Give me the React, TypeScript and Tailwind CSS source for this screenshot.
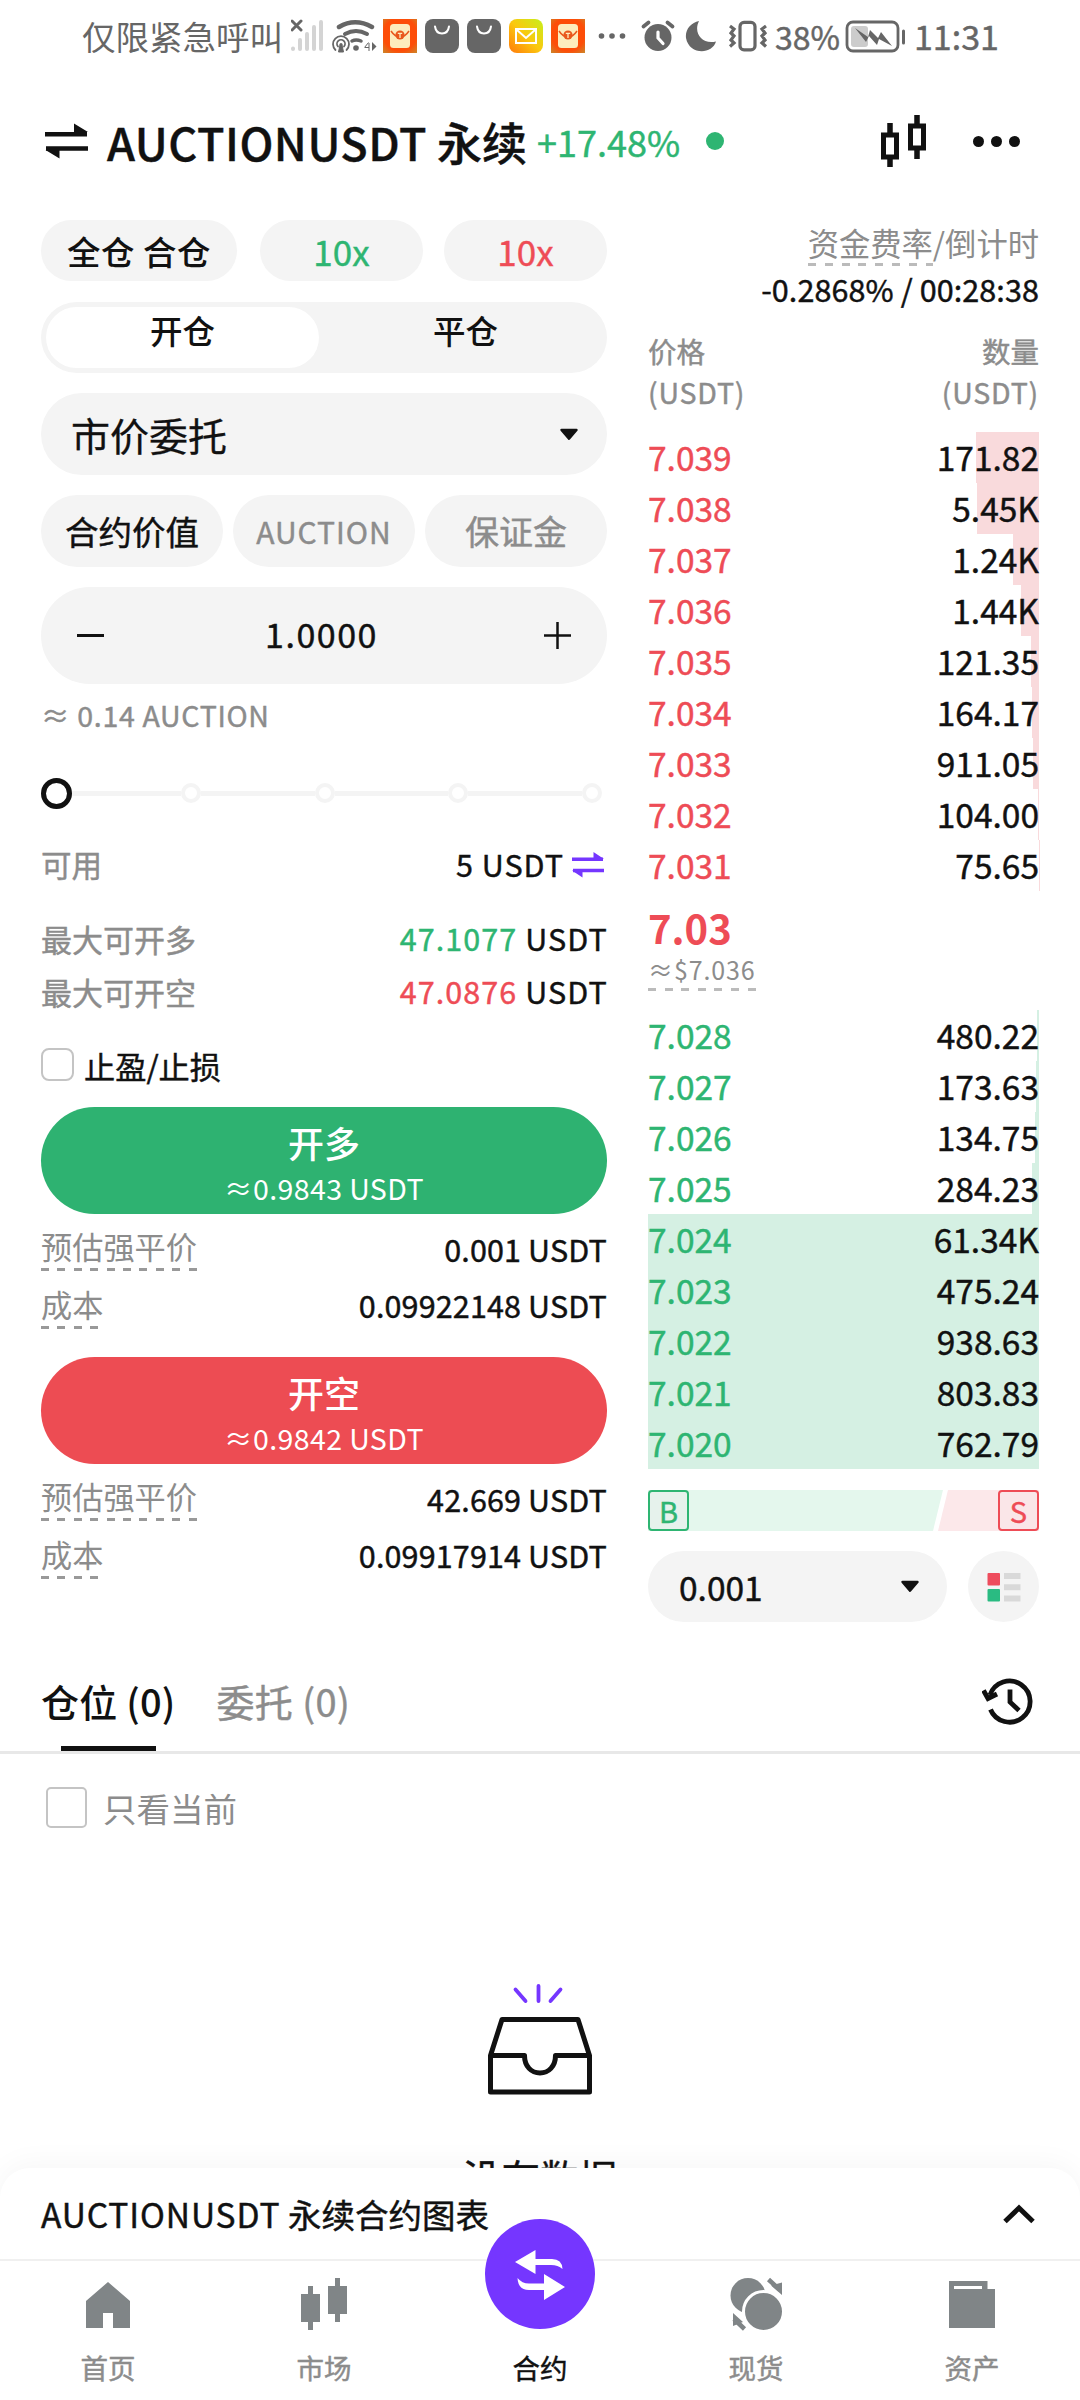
import { useState, type ReactNode } from "react";

type BookRow = { price: string; amount: string; depth: number };

// depth is the bar width in px, out of the 391px wide column
const ASKS: BookRow[] = [
  { price: "7.039", amount: "171.82", depth: 63 },
  { price: "7.038", amount: "5.45K", depth: 62 },
  { price: "7.037", amount: "1.24K", depth: 26 },
  { price: "7.036", amount: "1.44K", depth: 18 },
  { price: "7.035", amount: "121.35", depth: 8 },
  { price: "7.034", amount: "164.17", depth: 7.5 },
  { price: "7.033", amount: "911.05", depth: 6.5 },
  { price: "7.032", amount: "104.00", depth: 1 },
  { price: "7.031", amount: "75.65", depth: 0.5 },
];

const BIDS: BookRow[] = [
  { price: "7.028", amount: "480.22", depth: 2.5 },
  { price: "7.027", amount: "173.63", depth: 3.5 },
  { price: "7.026", amount: "134.75", depth: 4.5 },
  { price: "7.025", amount: "284.23", depth: 7 },
  { price: "7.024", amount: "61.34K", depth: 391 },
  { price: "7.023", amount: "475.24", depth: 391 },
  { price: "7.022", amount: "938.63", depth: 391 },
  { price: "7.021", amount: "803.83", depth: 391 },
  { price: "7.020", amount: "762.79", depth: 391 },
];

const MEDIUM = "[-webkit-text-stroke:0.45px_currentColor]";

function Caret() {
  return (
    <svg width="20" height="13" viewBox="0 0 20 13" aria-hidden>
      <path
        d="M2.5 2h15L10 10.8z"
        fill="#111"
        stroke="#111"
        strokeWidth="2.4"
        strokeLinejoin="round"
      />
    </svg>
  );
}

function RedPacket() {
  return (
    <svg width="34" height="34" viewBox="0 0 34 34" aria-hidden>
      <defs>
        <radialGradient id="packet" cx="50%" cy="45%" r="75%">
          <stop offset="0.65" stopColor="#fd4d08" />
          <stop offset="1" stopColor="#c98a2c" />
        </radialGradient>
      </defs>
      <rect width="34" height="34" fill="url(#packet)" />
      <rect x="7" y="5" width="20" height="24" rx="3.5" fill="#fdecbd" />
      <path d="M8 12q4 6 9 6t9-6" fill="none" stroke="#e9571c" strokeWidth="1.5" />
      <circle cx="17" cy="16" r="4.6" fill="#e9571c" />
      <path d="M14.8 14.4h4.4M17 14.4V19" stroke="#fdecbd" strokeWidth="1.3" />
    </svg>
  );
}

function Bag() {
  return (
    <svg width="34" height="34" viewBox="0 0 34 34" aria-hidden>
      <rect width="34" height="34" rx="8" fill="#666" />
      <path
        d="M10 7.500q1 7 7 7t7-7"
        fill="none"
        stroke="#fff"
        strokeWidth="2"
        strokeLinecap="round"
      />
    </svg>
  );
}

function Mail() {
  return (
    <svg width="34" height="34" viewBox="0 0 34 34" aria-hidden>
      <defs>
        <linearGradient id="mail" x1="0" y1="1" x2="1" y2="0">
          <stop offset="0" stopColor="#ff7a0a" />
          <stop offset="0.5" stopColor="#fbc80f" />
          <stop offset="1" stopColor="#c6f01c" />
        </linearGradient>
      </defs>
      <rect width="34" height="34" rx="8" fill="url(#mail)" />
      <path
        d="M7 10h20v14H7zM8 11l9 8 9-8"
        fill="none"
        stroke="#fff"
        strokeWidth="2"
      />
    </svg>
  );
}

function StatusBar() {
  return (
    <div className="flex h-[72px] items-center pl-[82px] text-[#666]">
      <span className="w-[209px] whitespace-nowrap text-[33.5px] leading-none">
        仅限紧急呼叫
      </span>
      <svg width="92" height="34" viewBox="0 0 92 34" aria-hidden>
        <path
          d="M1 2l9 9M10 2l-9 9"
          stroke="#666"
          strokeWidth="3"
          strokeLinecap="round"
        />
        <path
          d="M2 29.500v.5M9 21v9M16 15v15M23 8v22M30 3v27"
          stroke="#d4d4d4"
          strokeWidth="4"
          strokeLinecap="round"
        />
        <g fill="none" stroke="#666" strokeLinecap="round">
          <path d="M48 8q16-9.500 33 0" strokeWidth="4.500" />
          <path d="M54 15q11-6 22 0" strokeWidth="4" />
          <path d="M61 22q4-2 9 0" strokeWidth="3.500" />
          <path
            d="M44.500 31a8 8 0 1 1 11 0M47 27.500a4 4 0 1 1 6 0"
            strokeWidth="1.800"
          />
        </g>
        <circle cx="65" cy="29" r="2.800" fill="#666" />
        <circle cx="50" cy="25.500" r="1.600" fill="#666" />
        <path d="M49 26h2l1.500 7h-5zM78 24v8M74 28.500h4M77.500 23.500l-4 5" stroke="#666" fill="#666" />
        <path d="M81 23l4.500 4.500L81 32z" fill="#666" />
      </svg>
      <div className="flex gap-2">
        <RedPacket />
        <Bag />
        <Bag />
        <Mail />
        <RedPacket />
      </div>
      <svg width="188" height="34" viewBox="0 0 188 34" aria-hidden>
        <g fill="#666">
          <circle cx="16.500" cy="17" r="2.800" />
          <circle cx="27" cy="17" r="2.800" />
          <circle cx="37.500" cy="17" r="2.800" />
          <circle cx="73" cy="18.500" r="13.500" />
          <path d="M114 2c-6 12 3 24 17 20.500C127 36 104 36 101 19 100 10 106 4 114 2z" />
        </g>
        <path
          d="M73 13v6l5 5.500"
          fill="none"
          stroke="#fff"
          strokeWidth="3.200"
          strokeLinecap="round"
        />
        <path
          d="M58.500 7.500l5-4M87.500 7.500l-5-4"
          stroke="#666"
          strokeWidth="3.800"
          strokeLinecap="round"
        />
        <g fill="none" stroke="#666" strokeWidth="3.200">
          <rect x="155" y="3.400" width="15" height="27.500" rx="4" />
          <path d="M145 7l4 3-3 4 3 3-3 4 3 3-4 3.500M181 7l-4 3 3 4-3 3 3 4-3 3 4 3.500" />
        </g>
      </svg>
      <span className={`ml-[2px] w-[70px] text-[32px] leading-none ${MEDIUM}`}>38%</span>
      <svg width="62" height="34" viewBox="0 0 62 34" aria-hidden>
        <rect x="2" y="3" width="51" height="29" rx="6" fill="none" stroke="#666" strokeWidth="2.800" />
        <rect x="6" y="7" width="17" height="21" rx="3" fill="#ccc" />
        <path d="M10 9l13 9 2-7 8 8 3-6 11 14-13-7-2 6-8-9-3 6z" fill="#666" />
        <path d="M58.500 12v12" stroke="#666" strokeWidth="3" strokeLinecap="round" />
      </svg>
      <span className={`ml-[7px] text-[34px] leading-none ${MEDIUM}`}>11:31</span>
    </div>
  );
}

function Header() {
  return (
    <header className="flex h-[138px] items-center pl-[44px] pr-[60px]">
      <svg width="46" height="36" viewBox="0 0 46 36" aria-hidden>
        <path d="M1 11.300h42M2 25.500h42" stroke="#111" strokeWidth="4.600" />
        <path d="M30 .5V9h14zM15.500 35.500V27H1.500z" fill="#111" />
      </svg>
      <h1 className="ml-[17px] mt-px whitespace-nowrap text-[45px] font-medium leading-none [-webkit-text-stroke:0.4px_currentColor]">
        <span className="tracking-[0.500px]">AUCTIONUSDT</span> 永续
      </h1>
      <span className={`ml-[10px] whitespace-nowrap text-[36px] leading-none text-[#2eb572] ${MEDIUM}`}>
        +17.48%
      </span>
      <span className="ml-[26px] size-[18px] rounded-full bg-[#2eb572]" />
      <svg className="ml-auto" width="50" height="52" viewBox="0 0 50 52" aria-hidden>
        <g fill="none" stroke="#111">
          <rect x="3.500" y="20" width="13" height="22" strokeWidth="5" />
          <path d="M10 8v11M10 43v9" strokeWidth="5.500" />
          <rect x="30.500" y="11" width="13" height="22" strokeWidth="5" />
          <path d="M37 0v10M37 34v10" strokeWidth="5.500" />
        </g>
      </svg>
      <div className="ml-[43px] flex gap-[7px]">
        <span className="size-[11px] rounded-full bg-[#111]" />
        <span className="size-[11px] rounded-full bg-[#111]" />
        <span className="size-[11px] rounded-full bg-[#111]" />
      </div>
    </header>
  );
}

function Pill({ className, children }: { className: string; children: ReactNode }) {
  return (
    <button
      className={`flex items-center justify-center whitespace-nowrap rounded-full bg-[#f4f4f4] leading-none ${className}`}
    >
      {children}
    </button>
  );
}

function HintLabel({ children }: { children: ReactNode }) {
  return (
    <span className="flex flex-col gap-[5px] text-[31.200px] leading-[34px] text-[#8c8c8c]">
      {children}
      <span className="h-[3px] bg-[repeating-linear-gradient(90deg,#999_0_8px,transparent_8px_16.400px)]" />
    </span>
  );
}

function Slider() {
  return (
    <div className="flex h-[94px] items-center pr-[5px]">
      <span className="z-10 -mr-[5px] size-[31px] shrink-0 rounded-full border-[5px] border-[#111] bg-white" />
      {[25, 50, 75, 100].map((step) => (
        <div key={step} className="flex flex-1 items-center">
          <span className="h-[5px] flex-1 bg-[#f4f4f4]" />
          <span className="size-[20px] rounded-full border-4 border-[#f4f4f4] bg-white" />
        </div>
      ))}
    </div>
  );
}

function OrderSide({
  label,
  size,
  liquidation,
  cost,
  className,
}: {
  label: string;
  size: string;
  liquidation: string;
  cost: string;
  className: string;
}) {
  return (
    <div>
      <button
        className={`flex h-[107px] w-full flex-col items-center rounded-full pt-[15px] text-white ${className}`}
      >
        <span className="text-[36px] font-medium leading-[40px]">{label}</span>
        <span className="mt-[10px] text-[28.500px] leading-[32px] tracking-[0.400px]">
          ≈{size} USDT
        </span>
      </button>
      <div className="flex h-[64px] items-center justify-between">
        <div className="pt-[8px]">
          <HintLabel>预估强平价</HintLabel>
        </div>
        <span className={`pt-[7px] text-[30.500px] tracking-[0.150px] ${MEDIUM}`}>{liquidation} USDT</span>
      </div>
      <div className="flex h-[52px] items-center justify-between">
        <div className="pt-[8px]">
          <HintLabel>成本</HintLabel>
        </div>
        <span className={`pt-[4px] text-[30.500px] tracking-[0.150px] ${MEDIUM}`}>{cost} USDT</span>
      </div>
    </div>
  );
}

function OrderForm() {
  const [mode, setMode] = useState("开仓");
  return (
    <section className="w-[566px]">
      <div className="flex h-[61px]">
        <Pill className="w-[196px] text-[33.500px] tracking-[0.500px] font-medium">全仓 合仓</Pill>
        <Pill className={`ml-[23px] w-[163px] text-[35px] text-[#2eb572] ${MEDIUM}`}>10x</Pill>
        <Pill className={`ml-[21px] w-[163px] text-[35px] text-[#ee4c56] ${MEDIUM}`}>10x</Pill>
      </div>

      <div className="mt-[21px] flex h-[71px] justify-between rounded-full bg-[#f4f4f4] p-[5px]">
        {["开仓", "平仓"].map((m) => (
          <button
            key={m}
            onClick={() => setMode(m)}
            className={`h-[61px] w-[273px] rounded-full pb-[14px] text-[32.500px] font-medium leading-none ${
              mode === m ? "bg-white" : ""
            }`}
          >
            {m}
          </button>
        ))}
      </div>

      <div className="mt-5 flex h-[82px] items-center justify-between rounded-full bg-[#f4f4f4] pl-[30px] pr-[28px]">
        <span className="text-[39px] leading-none [-webkit-text-stroke:0.3px_currentColor]">市价委托</span>
        <Caret />
      </div>

      <div className="mt-5 flex h-[72px] justify-between">
        <Pill className={`w-[182px] text-[33.500px] ${MEDIUM}`}>合约价值</Pill>
        <Pill className={`w-[182px] text-[30px] tracking-[1px] text-[#8c8c8c] ${MEDIUM}`}>AUCTION</Pill>
        <Pill className={`w-[182px] text-[34px] text-[#8c8c8c] ${MEDIUM}`}>保证金</Pill>
      </div>

      <div className="mt-5 flex h-[97px] items-center justify-between rounded-full bg-[#f4f4f4] px-[36px]">
        <span className="h-[2.500px] w-[27px] bg-[#111]" />
        <span className={`mr-[5px] pb-[4px] text-[34px] leading-none tracking-[1.500px] ${MEDIUM}`}>1.0000</span>
        <svg width="27" height="27" viewBox="0 0 27 27" aria-hidden>
          <path d="M0 13.500h27M13.500 0v27" stroke="#111" strokeWidth="2.500" />
        </svg>
      </div>

      <p className={`flex h-[62px] items-center text-[28.500px] tracking-[0.700px] text-[#8c8c8c] ${MEDIUM}`}>
        ≈ 0.14 AUCTION
      </p>

      <Slider />

      <div className="flex h-[50px] items-center">
        <span className={`text-[30.500px] text-[#8c8c8c] ${MEDIUM}`}>可用</span>
        <span className={`ml-auto text-[30.500px] tracking-[1px] ${MEDIUM}`}>5 USDT</span>
        <svg className="ml-[8px] mr-[3px]" width="32" height="26" viewBox="0 0 32 26" aria-hidden>
          <path d="M0 7.200h31M1 18.500h31" stroke="#7536ff" strokeWidth="3.400" />
          <path d="M21.500 0v7H32zM10.500 25.500v-7H0z" fill="#7536ff" />
        </svg>
      </div>

      <div className="mt-[23px] flex h-[52px] items-center justify-between">
        <span className={`text-[31px] text-[#8c8c8c] ${MEDIUM}`}>最大可开多</span>
        <span className={`-mr-px text-[30.500px] tracking-[1.100px] ${MEDIUM}`}>
          <span className="text-[#2eb572]">47.1077</span> USDT
        </span>
      </div>
      <div className="flex h-[54px] items-center justify-between">
        <span className={`text-[31px] text-[#8c8c8c] ${MEDIUM}`}>最大可开空</span>
        <span className={`-mr-px text-[30.500px] tracking-[1.100px] ${MEDIUM}`}>
          <span className="text-[#ee4c56]">47.0876</span> USDT
        </span>
      </div>

      <label className="flex h-[88px] items-center gap-[10px] pt-[3px]">
        <span className="size-[33px] rounded-[8px] border-2 border-[#c4c4c4]" />
        <span className={`pt-[3px] text-[31.200px] ${MEDIUM}`}>止盈/止损</span>
      </label>

      <OrderSide
        label="开多"
        size="0.9843"
        liquidation="0.001"
        cost="0.09922148"
        className="bg-[#2eb271]"
      />
      <div className="mt-[27px]">
        <OrderSide
          label="开空"
          size="0.9842"
          liquidation="42.669"
          cost="0.09917914"
          className="bg-[#ed4c53]"
        />
      </div>
    </section>
  );
}

function BookRows({ rows, side }: { rows: BookRow[]; side: "ask" | "bid" }) {
  const ask = side === "ask";
  return (
    <div className={`text-[33.500px] ${MEDIUM}`}>
      {rows.map((row) => (
        <div key={row.price} className="relative flex h-[51px] items-center justify-between pb-[2px] leading-none">
          <div
            className={`absolute inset-y-0 right-0 ${ask ? "bg-[#f9dadc]" : "bg-[#d5f0e3]"}`}
            style={{ width: row.depth }}
          />
          <span className={`relative ${ask ? "text-[#ee4c56]" : "text-[#2eb572]"}`}>
            {row.price}
          </span>
          <span className="relative">{row.amount}</span>
        </div>
      ))}
    </div>
  );
}

function OrderBook() {
  return (
    <section className="w-[391px]">
      <div className="flex h-[46px] justify-end text-[31.300px] leading-[46px] text-[#8c8c8c]">
        <span className="bg-[repeating-linear-gradient(90deg,#bbb_0_8px,transparent_8px_16.800px)] bg-[length:100%_3px] bg-bottom bg-no-repeat">
          资金费率
        </span>
        /倒计时
      </div>
      <p className={`whitespace-nowrap text-right text-[30.500px] leading-[46px] tracking-[0.100px] ${MEDIUM}`}>
        -0.2868% / 00:28:38
      </p>

      <div className={`mt-[18px] flex justify-between text-[28.500px] leading-[41px] text-[#8c8c8c] ${MEDIUM}`}>
        <div>
          价格
          <br />
          <span className="tracking-[0.800px]">(USDT)</span>
        </div>
        <div className="text-right">
          数量
          <br />
          <span className="tracking-[0.800px]">(USDT)</span>
        </div>
      </div>

      <div className="mt-5">
        <BookRows rows={ASKS} side="ask" />
      </div>

      <div className="flex h-[119px] flex-col items-start pt-[14px]">
        <span className="text-[40px] font-bold leading-[44px] text-[#ee4c56]">7.03</span>
        <span className="mt-[6px] w-[109px] whitespace-nowrap text-[25px] leading-[28px] tracking-[0.900px] text-[#8c8c8c]">
          ≈$7.036
        </span>
        <span className="mt-[5px] h-[3px] w-[108px] bg-[repeating-linear-gradient(90deg,#bbb_0_8px,transparent_8px_16.600px)]" />
      </div>

      <BookRows rows={BIDS} side="bid" />

      <div className={`mt-[21px] flex h-[41px] text-[29px] ${MEDIUM}`}>
        <div className="flex flex-1 bg-[#e4f7ed] [clip-path:polygon(0_0,100%_0,calc(100%_-_10px)_100%,0_100%)]">
          <span className="flex size-[41px] items-center justify-center rounded border-[2.500px] border-[#2eb572] bg-[#e6f2ec] pb-px leading-none text-[#2eb572]">
            B
          </span>
        </div>
        <div className="-ml-[5px] flex w-[101px] justify-end bg-[#fce8ea] [clip-path:polygon(10px_0,100%_0,100%_100%,0_100%)]">
          <span className="flex size-[41px] items-center justify-center rounded border-[2.500px] border-[#ee4c56] bg-[#fae6e8] pb-px leading-none text-[#ee4c56]">
            S
          </span>
        </div>
      </div>

      <div className="mt-5 flex h-[71px] justify-between">
        <div className="flex w-[299px] items-center justify-between rounded-full bg-[#f4f4f4] pl-[31px] pr-[27px]">
          <span className={`text-[33.500px] leading-none ${MEDIUM}`}>0.001</span>
          <Caret />
        </div>
        <button className="flex size-[71px] items-center justify-center rounded-full bg-[#f4f4f4]" aria-label="Depth view">
          <svg width="34" height="30" viewBox="0 0 34 30">
            <rect x=".5" y="1" width="12.500" height="12.500" rx="1" fill="#ee4c5d" />
            <rect x=".5" y="17" width="12.500" height="12.500" rx="1" fill="#2abb82" />
            <path d="M17 4h16.500M17 15.200h16.500M17 26.500h16.500" stroke="#d9d9d9" strokeWidth="6" />
          </svg>
        </button>
      </div>
    </section>
  );
}

function Positions() {
  return (
    <section>
      <div className="mt-[28px] flex h-[104px] items-center border-b-[3px] border-[#e8e8e8] pl-[41px] pr-[46px] text-[38px]">
        <div className="relative flex h-full items-center whitespace-nowrap font-medium tracking-[0.200px]">
          仓位 (0)
          <span className="absolute bottom-0 left-[20px] h-[5px] w-[95px] bg-[#111]" />
        </div>
        <span className={`ml-[41px] whitespace-nowrap tracking-[0.400px] text-[#8c8c8c] ${MEDIUM}`}>委托 (0)</span>
        <svg className="ml-auto" width="52" height="50" viewBox="0 0 52 50" aria-hidden>
          <g fill="none" stroke="#111" strokeWidth="4.800">
            <path d="M8.500 33.500A20.600 20.600 0 1 0 8 19" />
            <path d="M1.500 14.500l4.500 8 9-4.500" />
            <path d="M28 13.500V26l9 8.500" />
          </g>
        </svg>
      </div>
      <label className="mt-[33px] flex h-[41px] items-center gap-[16px] pl-[46px]">
        <span className="size-[41px] rounded-[5px] border-[2.500px] border-[#c4c4c4]" />
        <span className="text-[33.500px] leading-none text-[#8c8c8c]">只看当前</span>
      </label>
      <div className="mt-[154px] flex flex-col items-center">
        <svg width="108" height="118" viewBox="0 0 108 118" fill="none" aria-hidden>
          <path
            d="M29.500 7.500l10 11.500M52.500 4v15M74.500 7.500l-10 11.500"
            stroke="#7536ff"
            strokeWidth="3.800"
            strokeLinecap="round"
          />
          <path
            d="M4.500 73.500L16 37.500h76l11.500 36V110h-99zM4.500 73.500h34c0 11 7 17.500 15.500 17.500s15.500-6.500 15.500-17.500h34"
            stroke="#111"
            strokeWidth="5"
            strokeLinejoin="round"
          />
        </svg>
        <p className={`mt-[57px] text-[38.500px] leading-none ${MEDIUM}`}>没有数据</p>
      </div>
    </section>
  );
}

function NavItem({ label, children }: { label: string; children: ReactNode }) {
  return (
    <div className="flex flex-1 flex-col items-center pt-[15px] text-[#8c8c8c]">
      <svg width="56" height="56" viewBox="0 0 56 56" aria-hidden>
        {children}
      </svg>
      <span className={`mt-[20px] text-[27.500px] leading-[30px] ${MEDIUM}`}>{label}</span>
    </div>
  );
}

function BottomBar() {
  return (
    <footer className="absolute inset-x-0 bottom-0 rounded-t-[30px] bg-white shadow-[0_-4px_30px_rgba(0,0,0,0.04)]">
      <div className="flex h-[91px] items-center justify-between pl-[41px] pr-[44px]">
        <span className={`pt-px text-[33.500px] ${MEDIUM}`}>
          <span className="tracking-[0.900px]">AUCTIONUSDT</span> 永续合约图表
        </span>
        <svg width="34" height="22" viewBox="0 0 34 22" aria-hidden>
          <path d="M3 18.500L17 5l14 13.500" fill="none" stroke="#111" strokeWidth="5" />
        </svg>
      </div>
      <nav className="flex h-[141px] border-t-2 border-[#f0f0f0]">
        <NavItem label="首页">
          <path d="M28 6l22 19v27H33V37H23v15H6V25z" fill="#808587" />
        </NavItem>
        <NavItem label="市场">
          <path
            d="M5 18h7v-8h5v8h7v28h-7v8h-5v-8H5zM32 10h7V2h5v8h7v28h-7v8h-5v-8h-7z"
            fill="#808587"
          />
        </NavItem>
        <div className="relative flex flex-1 flex-col items-center pt-[91px]">
          <span className="absolute left-1/2 top-[-42px] size-[110px] -translate-x-1/2 rounded-full bg-[#7536ff]">
            <svg width="110" height="110" viewBox="0 0 110 110" aria-hidden>
              <path
                d="M30 43L50.500 31v9H67q10 0 10.500 10Q73 46 66 46H50.500v9zM80 68L59 81V71H44Q33 71 32.500 59q4.500 5.500 11.500 5.500h15V55z"
                fill="#fff"
              />
            </svg>
          </span>
          <span className={`text-[27.500px] leading-[30px] ${MEDIUM}`}>合约</span>
        </div>
        <NavItem label="现货">
          <circle cx="20" cy="19.500" r="17.500" fill="#808587" />
          <circle cx="35.500" cy="35.500" r="20" fill="#808587" stroke="#fff" strokeWidth="3" />
          <path d="M40.500 3.500L52 14M16.500 53L6 43" stroke="#808587" strokeWidth="4.500" />
          <path d="M54 6.500V19L43 9.500zM5 37v13l10-4z" fill="#808587" />
        </NavItem>
        <NavItem label="资产">
          <path d="M5 5h38.500v8H51v39H5zM10 10v3h28v-3z" fill="#808587" fillRule="evenodd" />
        </NavItem>
      </nav>
    </footer>
  );
}

export default function App() {
  return (
    <div className="relative h-[2400px] w-[1080px] overflow-hidden bg-white font-['Noto_Sans_CJK_SC',sans-serif] text-[#111]">
      <StatusBar />
      <Header />
      <main>
        <div className="flex justify-between px-[41px] pt-[10px]">
          <OrderForm />
          <OrderBook />
        </div>
        <Positions />
      </main>
      <BottomBar />
    </div>
  );
}
